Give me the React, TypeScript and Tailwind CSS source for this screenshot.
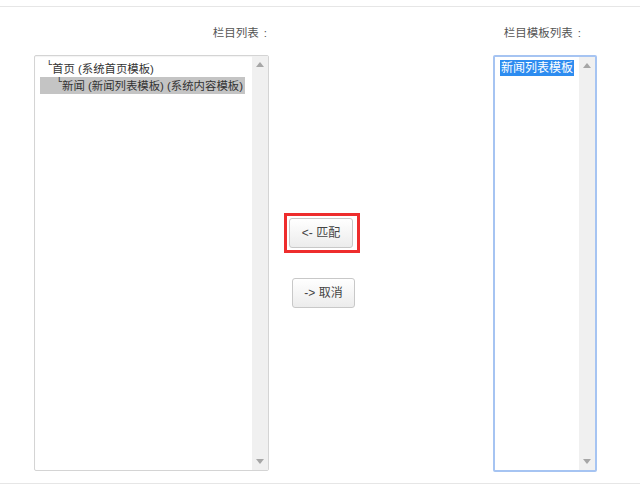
import React from "react";

function ScrollBar() {
  return (
    <div className="flex w-[16px] shrink-0 flex-col items-center justify-between bg-[#f0f0f0] py-[6px]">
      <svg width="8" height="5" viewBox="0 0 8 5">
        <polygon points="4,0 8,5 0,5" fill="#a6a6a6" />
      </svg>
      <svg width="8" height="5" viewBox="0 0 8 5">
        <polygon points="0,0 8,0 4,5" fill="#a6a6a6" />
      </svg>
    </div>
  );
}

function Corner() {
  return (
    <span
      className="inline-block w-[6px] overflow-hidden text-[10px] leading-none align-[3px]"
      style={{ fontFamily: '"DejaVu Sans", sans-serif' }}
    >
      └
    </span>
  );
}

export default function App() {
  const font = { fontFamily: '"Liberation Sans", "Noto Sans CJK SC", sans-serif' };
  return (
    <div className="w-[640px] h-[501px] bg-white text-[12px] text-[#333]" style={font}>
      <div className="h-[6px]" />
      <div className="border-t border-[#e6e6e6]" />
      <div className="flex pt-[18px]">
        {/* left column */}
        <div className="ml-[34px] flex w-[235px] flex-col">
          <div className="h-[16px] text-right text-[11.5px] leading-[16px] text-[#555]">
            栏目列表<span className="ml-[5px] mr-[2px]">:</span>
          </div>
          <div className="mt-[14px] flex h-[416px] rounded-[2px] border border-[#d4d4d4] shadow-[inset_0_1px_1px_rgba(0,0,0,0.05)]">
            <div className="min-w-0 flex-1 overflow-hidden pl-[5px] pt-[4px] text-[11.4px] leading-[16px]">
              <div className="whitespace-nowrap pl-[6px]"><Corner />首页 (系统首页模板)</div>
              <div className="inline-block whitespace-nowrap bg-[#c4c4c4] pl-[16px] pr-[2px]"><Corner />新闻 (新闻列表模板) (系统内容模板)</div>
            </div>
            <ScrollBar />
          </div>
        </div>
        {/* middle column */}
        <div className="flex w-[224px] flex-col pt-[188px]">
          <div className="ml-[15px] w-[76px] border-[3px] border-[#ee2d2d] p-[2px]">
            <button className="flex h-[30px] w-[64px] items-center justify-center rounded-[3px] border border-[#c8c8c8] bg-gradient-to-b from-white to-[#ececec] text-[12px] text-[#444]">
              &lt;- 匹配
            </button>
          </div>
          <button className="ml-[23px] mt-[25px] flex h-[30px] w-[63px] items-center justify-center rounded-[3px] border border-[#c8c8c8] bg-gradient-to-b from-white to-[#ececec] text-[12px] text-[#444]">
            -&gt; 取消
          </button>
        </div>
        {/* right column */}
        <div className="flex w-[104px] flex-col">
          <div className="h-[16px] pr-[16px] text-right text-[11.5px] leading-[16px] text-[#555]">
            栏目模板列表<span className="ml-[5px]">:</span>
          </div>
          <div className="mt-[14px] flex h-[417px] rounded-[2px] border-[2px] border-[#a6c4f2]">
            <div className="min-w-0 flex-1 overflow-hidden pl-[5px] pt-[3px] leading-[16px]">
              <div className="inline-block whitespace-nowrap bg-[#2d8cf0] px-[1px] text-white">新闻列表模板</div>
            </div>
            <ScrollBar />
          </div>
        </div>
      </div>
      <div className="mt-[11px] border-t border-[#e6e6e6]" />
    </div>
  );
}
